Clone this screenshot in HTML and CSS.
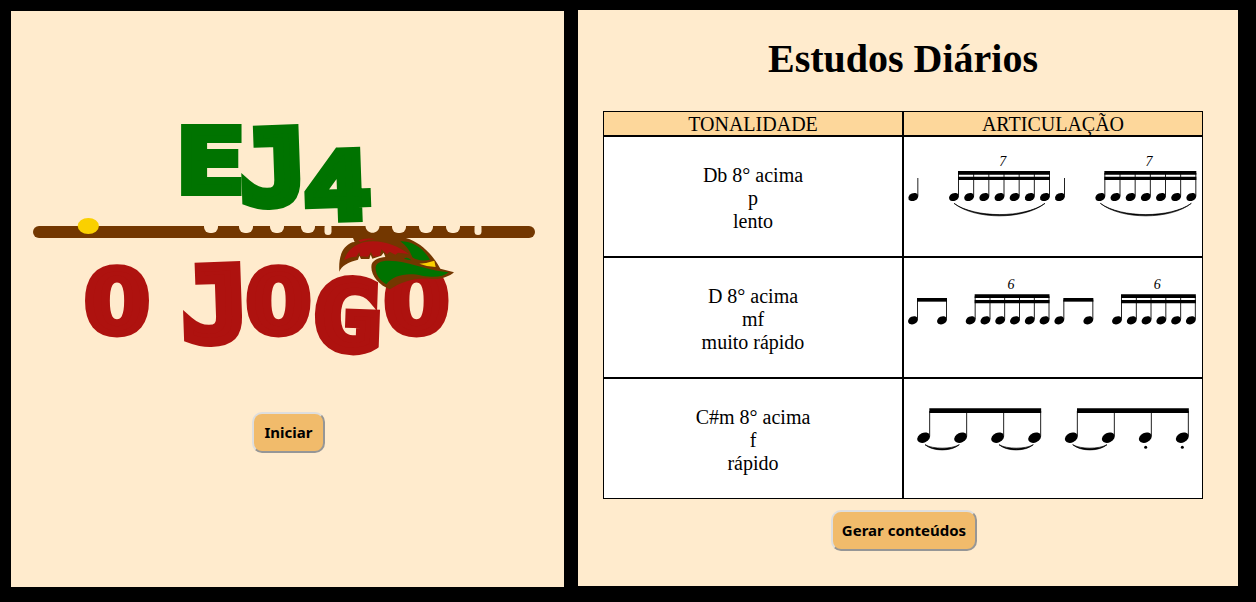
FILE: index.html
```
<!DOCTYPE html>
<html lang="pt-BR">
<head>
<meta charset="utf-8">
<title>EJ4 - O Jogo</title>
<link rel="stylesheet" href="styles.css">
</head>
<body>
<main class="screens">
  <section class="panel start">
    <svg class="logo" viewBox="11 111 553 260" role="img" aria-label="EJ4 O Jogo">
      <g class="letters green">
        <text class="wide" transform="translate(177 192) scale(1.110 .87)">E</text>
        <text class="wide" transform="rotate(-2 270 165) translate(240 204) scale(1.110 1.020)">J</text>
        <text transform="rotate(-2 338 185) translate(303 219) scale(1.13 .93)">4</text>
      </g>
      <g class="letters red">
        <text transform="translate(84.500 333) scale(1.08 .87)">O</text>
        <text class="wide" transform="rotate(-2 212 303) translate(182 341) scale(1.11 1.02)">J</text>
        <text transform="translate(246 333) scale(1.08 .87)">O</text>
        <text transform="rotate(2 348 315) translate(313 350) scale(1.13 .96)">G</text>
        <text transform="translate(384 333) scale(1.08 .87)">O</text>
      </g>
      <rect class="wood" x="33" y="226" width="502" height="12" rx="6"/>
      <g class="hole">
        <rect x="204" y="219" width="14" height="14" rx="6"/><rect x="239" y="219" width="14" height="14" rx="6"/>
        <rect x="270" y="219" width="14" height="14" rx="6"/><rect x="301" y="219" width="14" height="14" rx="6"/>
        <rect x="324.500" y="224" width="7" height="11" rx="3.500"/><path d="M365.500 226H379.500C379 235 366 235 365.500 226Z"/>
        <rect x="392" y="219" width="14" height="14" rx="6"/><rect x="419" y="219" width="14" height="14" rx="6"/>
        <rect x="446" y="219" width="14" height="14" rx="6"/><rect x="474.500" y="224" width="7" height="11" rx="3.500"/>
      </g>
      <ellipse class="yellow" cx="88.300" cy="226" rx="10.600" ry="8"/>
      <g transform="translate(280 210) scale(.33333)">
        <path class="wood" d="M178 185C175 140 187 109 217 97L224 96L219 84H378C424 98 458 134 481 176L522 187C508 200 482 209 456 207C408 201 366 214 330 238C294 224 269 191 275 163C281 148 298 143 316 141L311 128L304 137L277 146L272 134L268 147L243 147L238 137L234 149C205 156 184 168 178 185Z"/>
        <path class="redfill" d="M192 151C202 119 226 103 254 96C300 87 347 103 387 132L354 128L346 134L329 125L321 133L304 118L300 137L280 140L273 126L264 140L240 139L238 126L229 140C214 140 202 145 192 151Z"/>
        <path class="redfill" d="M235 91Q255 83 286 87Q261 89 241 96Z"/>
        <path class="greenfill" d="M361 94C397 93 430 115 450 149C430 153 411 152 397 142C389 121 380 108 361 94Z"/>
        <path class="greenfill" d="M372 146Q384 139 394 151Q383 150 372 146Z"/>
        <path class="greenfill" d="M287 177C284 153 315 149 350 154C399 161 456 184 506 187C488 202 461 203 426 197C382 186 338 196 319 223C300 211 289 198 287 177Z"/>
        <path class="yellow" d="M418 161Q440 160 463 152L467 171Q440 170 418 161Z"/>
      </g>
    </svg>
    <button class="btn" type="button">Iniciar</button>
  </section>

  <section class="panel studies">
    <h1 class="title">Estudos Diários</h1>
    <div class="table">
      <div class="cell head">TONALIDADE</div>
      <div class="cell head">ARTICULAÇÃO</div>

      <div class="cell words">Db 8° acima<br>p<br>lento</div>
      <div class="cell">
        <svg class="score" viewBox="12 96 894 357">
          <defs>
            <ellipse id="note" rx="15.500" ry="11.500" transform="rotate(-25)"/>
            <g id="seven">
              <use href="#note" x="0"/><use href="#note" x="45.500"/><use href="#note" x="91"/><use href="#note" x="136.500"/><use href="#note" x="182"/><use href="#note" x="227.500"/><use href="#note" x="273"/>
              <path class="stem" d="M13.500 -72V-4M59 -72V-4M104.500 -72V-4M150 -72V-4M195.500 -72V-4M241 -72V-4M286.500 -72V-4"/>
              <path class="beam" d="M12 -78H288V-67H12ZM12 -61H288V-51H12Z"/>
              <path class="slur" d="M0 19C62 64 211 64 273 19C211 69 62 69 0 19Z"/>
              <text class="tuplet" x="146" y="-92">7</text>
            </g>
          </defs>
          <use href="#note" x="40" y="276"/><path class="stem" d="M53.500 219V272"/>
          <use href="#seven" x="162" y="276"/>
          <use href="#note" x="480" y="276"/><path class="stem" d="M493.500 219V272"/>
          <use href="#seven" x="601" y="276"/>
        </svg>
      </div>

      <div class="cell words">D 8° acima<br>mf<br>muito rápido</div>
      <div class="cell">
        <svg class="score" viewBox="12 -21 894 357">
          <defs>
            <g id="pair">
              <use href="#note"/><use href="#note" x="87"/>
              <path class="stem" d="M13.500 -62V-4M100.500 -62V-4"/>
              <path class="beam" d="M12 -67H102V-56H12Z"/>
            </g>
            <g id="six">
              <use href="#note"/><use href="#note" x="44.300"/><use href="#note" x="88.600"/><use href="#note" x="133"/><use href="#note" x="177.300"/><use href="#note" x="221.600"/>
              <path class="stem" d="M13.500 -72V-4M58 -72V-4M102 -72V-4M146.500 -72V-4M191 -72V-4M235 -72V-4"/>
              <path class="beam" d="M12 -78H236.500V-67H12ZM12 -61H236.500V-51H12Z"/>
              <text class="tuplet" x="121" y="-93">6</text>
            </g>
          </defs>
          <use href="#pair" x="39" y="166"/><use href="#six" x="212" y="166"/>
          <use href="#pair" x="478" y="166"/><use href="#six" x="651" y="166"/>
        </svg>
      </div>

      <div class="cell words">C#m 8° acima<br>f<br>rápido</div>
      <div class="cell">
        <svg class="score" viewBox="12 -48 894 357">
          <defs>
            <ellipse id="bignote" rx="20" ry="14.500" transform="rotate(-25)"/>
            <g id="four">
              <use href="#bignote"/><use href="#bignote" x="111"/><use href="#bignote" x="222"/><use href="#bignote" x="333"/>
              <path class="stem" d="M18 -80V-4M129 -80V-4M240 -80V-4M351 -80V-4"/>
              <path class="beam" d="M17 -88H352.500V-74H17Z"/>
            </g>
            <path id="tie" class="slur" d="M4 21C28 35 83 35 107 21C83 42 28 42 4 21Z"/>
          </defs>
          <use href="#four" x="71" y="128"/><use href="#tie" x="71" y="128"/><use href="#tie" x="293" y="128"/>
          <use href="#four" x="514" y="128"/><use href="#tie" x="514" y="128"/>
          <circle cx="737" cy="157" r="4.500"/><circle cx="847" cy="157" r="4.500"/>
        </svg>
      </div>
    </div>
    <button class="btn" type="button">Gerar conteúdos</button>
  </section>
</main>
</body>
</html>
```
FILE: styles.css
```
* { box-sizing: border-box; }

body {
  margin: 0;
  background: #000;
  color: #000;
  font-family: "Liberation Serif", "Times New Roman", serif;
}

.screens {
  display: flex;
  gap: 14px;
  height: 602px;
  padding: 10px 18px 0 11px;
  overflow: hidden;
}

.panel {
  display: flex;
  flex-direction: column;
  align-items: center;
  height: 576px;
  background: #ffebcd;
}

.start {
  width: 553px;
  margin-top: 1px;
  padding-top: 100px;
}

.studies { width: 660px; }

.logo {
  display: block;
  width: 553px;
  height: 260px;
}

.letters {
  font: bold 100px "DejaVu Sans Mono", monospace;
  stroke-width: 8px;
  stroke-linejoin: miter;
}
.wide { stroke-width: 9px; }
.green { fill: #007300; stroke: #007300; }
.red { fill: #ae120f; stroke: #ae120f; }
.wood { fill: #733700; }
.hole { fill: #ffebcd; }
.yellow { fill: #fad000; }
.redfill { fill: #ae120f; }
.greenfill { fill: #007300; }

.title {
  margin: 26px 0 0;
  padding-right: 10px;
  font-size: 40px;
  line-height: 46px;
}

.table {
  display: grid;
  grid-template-columns: 300px 300px;
  grid-template-rows: 25px repeat(3, 121px);
  margin: 29px 10px 0 0;
}

.cell {
  border: 1px solid #000;
  background: #fff;
  font-size: 20px;
  line-height: 23px;
  text-align: center;
}
.words { padding-top: 27px; }
.head { background: #fdd79b; padding-top: 1px; }

.score { display: block; width: 298px; height: 119px; }
.stem { stroke: #222; stroke-width: 3; fill: none; }
.slur { stroke: #000; stroke-width: 2; }
.tuplet {
  font: italic 42px "Liberation Serif", serif;
  text-anchor: middle;
}

.btn {
  height: 41px;
  padding: 0 0 2px;
  border: 2px solid;
  border-color: #dedede #969696 #969696 #dedede;
  border-radius: 10px;
  background: #f1bb6b;
  color: #000;
  font: bold 15px "Noto Sans", sans-serif;
}
.start .btn { width: 73px; margin: 41px 0 0 2px; }
.studies .btn { width: 146px; margin: 11px 8px 0 0; }
```
